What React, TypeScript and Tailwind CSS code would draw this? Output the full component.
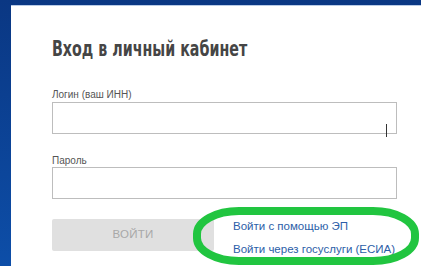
export default function App() {
  return (
    <div className="relative h-[266px] w-[421px] overflow-hidden bg-gradient-to-b from-[#0a3783] to-[#0d4ea8] pl-[11px] pt-[5px] font-['Liberation_Sans',Arial,sans-serif]">
      <div className="h-full border-t border-[#b9cbe6] bg-white pl-[41px] pt-[31px]">
        {/* Header */}
        <h1 className="origin-left scale-x-[0.72] whitespace-nowrap font-['DejaVu_Sans_Condensed',sans-serif] text-[22px] leading-[24px] font-bold text-[#454545]">
          Вход в личный кабинет
        </h1>

        <label className="mt-[27px] block text-[10px] leading-[13px] text-[#555]">Логин (ваш ИНН)</label>
        <input
          readOnly
          className="mt-px block h-[32px] w-[345px] border border-[#bdbdbd] bg-white outline-none"
        />

        <label className="mt-[20px] block text-[10px] leading-[13px] text-[#555]">Пароль</label>
        <input
          readOnly
          type="password"
          className="block h-[32px] w-[345px] border border-[#bdbdbd] bg-white outline-none"
        />

        <div className="mt-[20px] flex items-start">
          <button className="h-[32px] w-[162px] rounded-[2px] bg-[#e0e0e0] text-[11.5px] tracking-[0.2px] text-[#a8a8a8]">
            ВОЙТИ
          </button>
          <div className="ml-[19px] flex flex-col gap-[10px] pt-px text-[11.5px] leading-[13px] text-[#2c5ea8]">
            <a href="#">Войти с помощью ЭП</a>
            <a href="#">Войти через госуслуги (ЕСИА)</a>
          </div>
        </div>
      </div>

      {/* mouse I-beam cursor */}
      <div className="absolute left-[386px] top-[124px] h-[13px] w-px bg-[#333]" />

      {/* green highlight around the links */}
      <svg className="absolute left-0 top-0" width="421" height="266" viewBox="0 0 421 266">
        <rect x="197" y="211" width="218" height="50" rx="42" ry="23" fill="none" stroke="#21c540" strokeWidth="8" />
      </svg>
    </div>
  );
}
